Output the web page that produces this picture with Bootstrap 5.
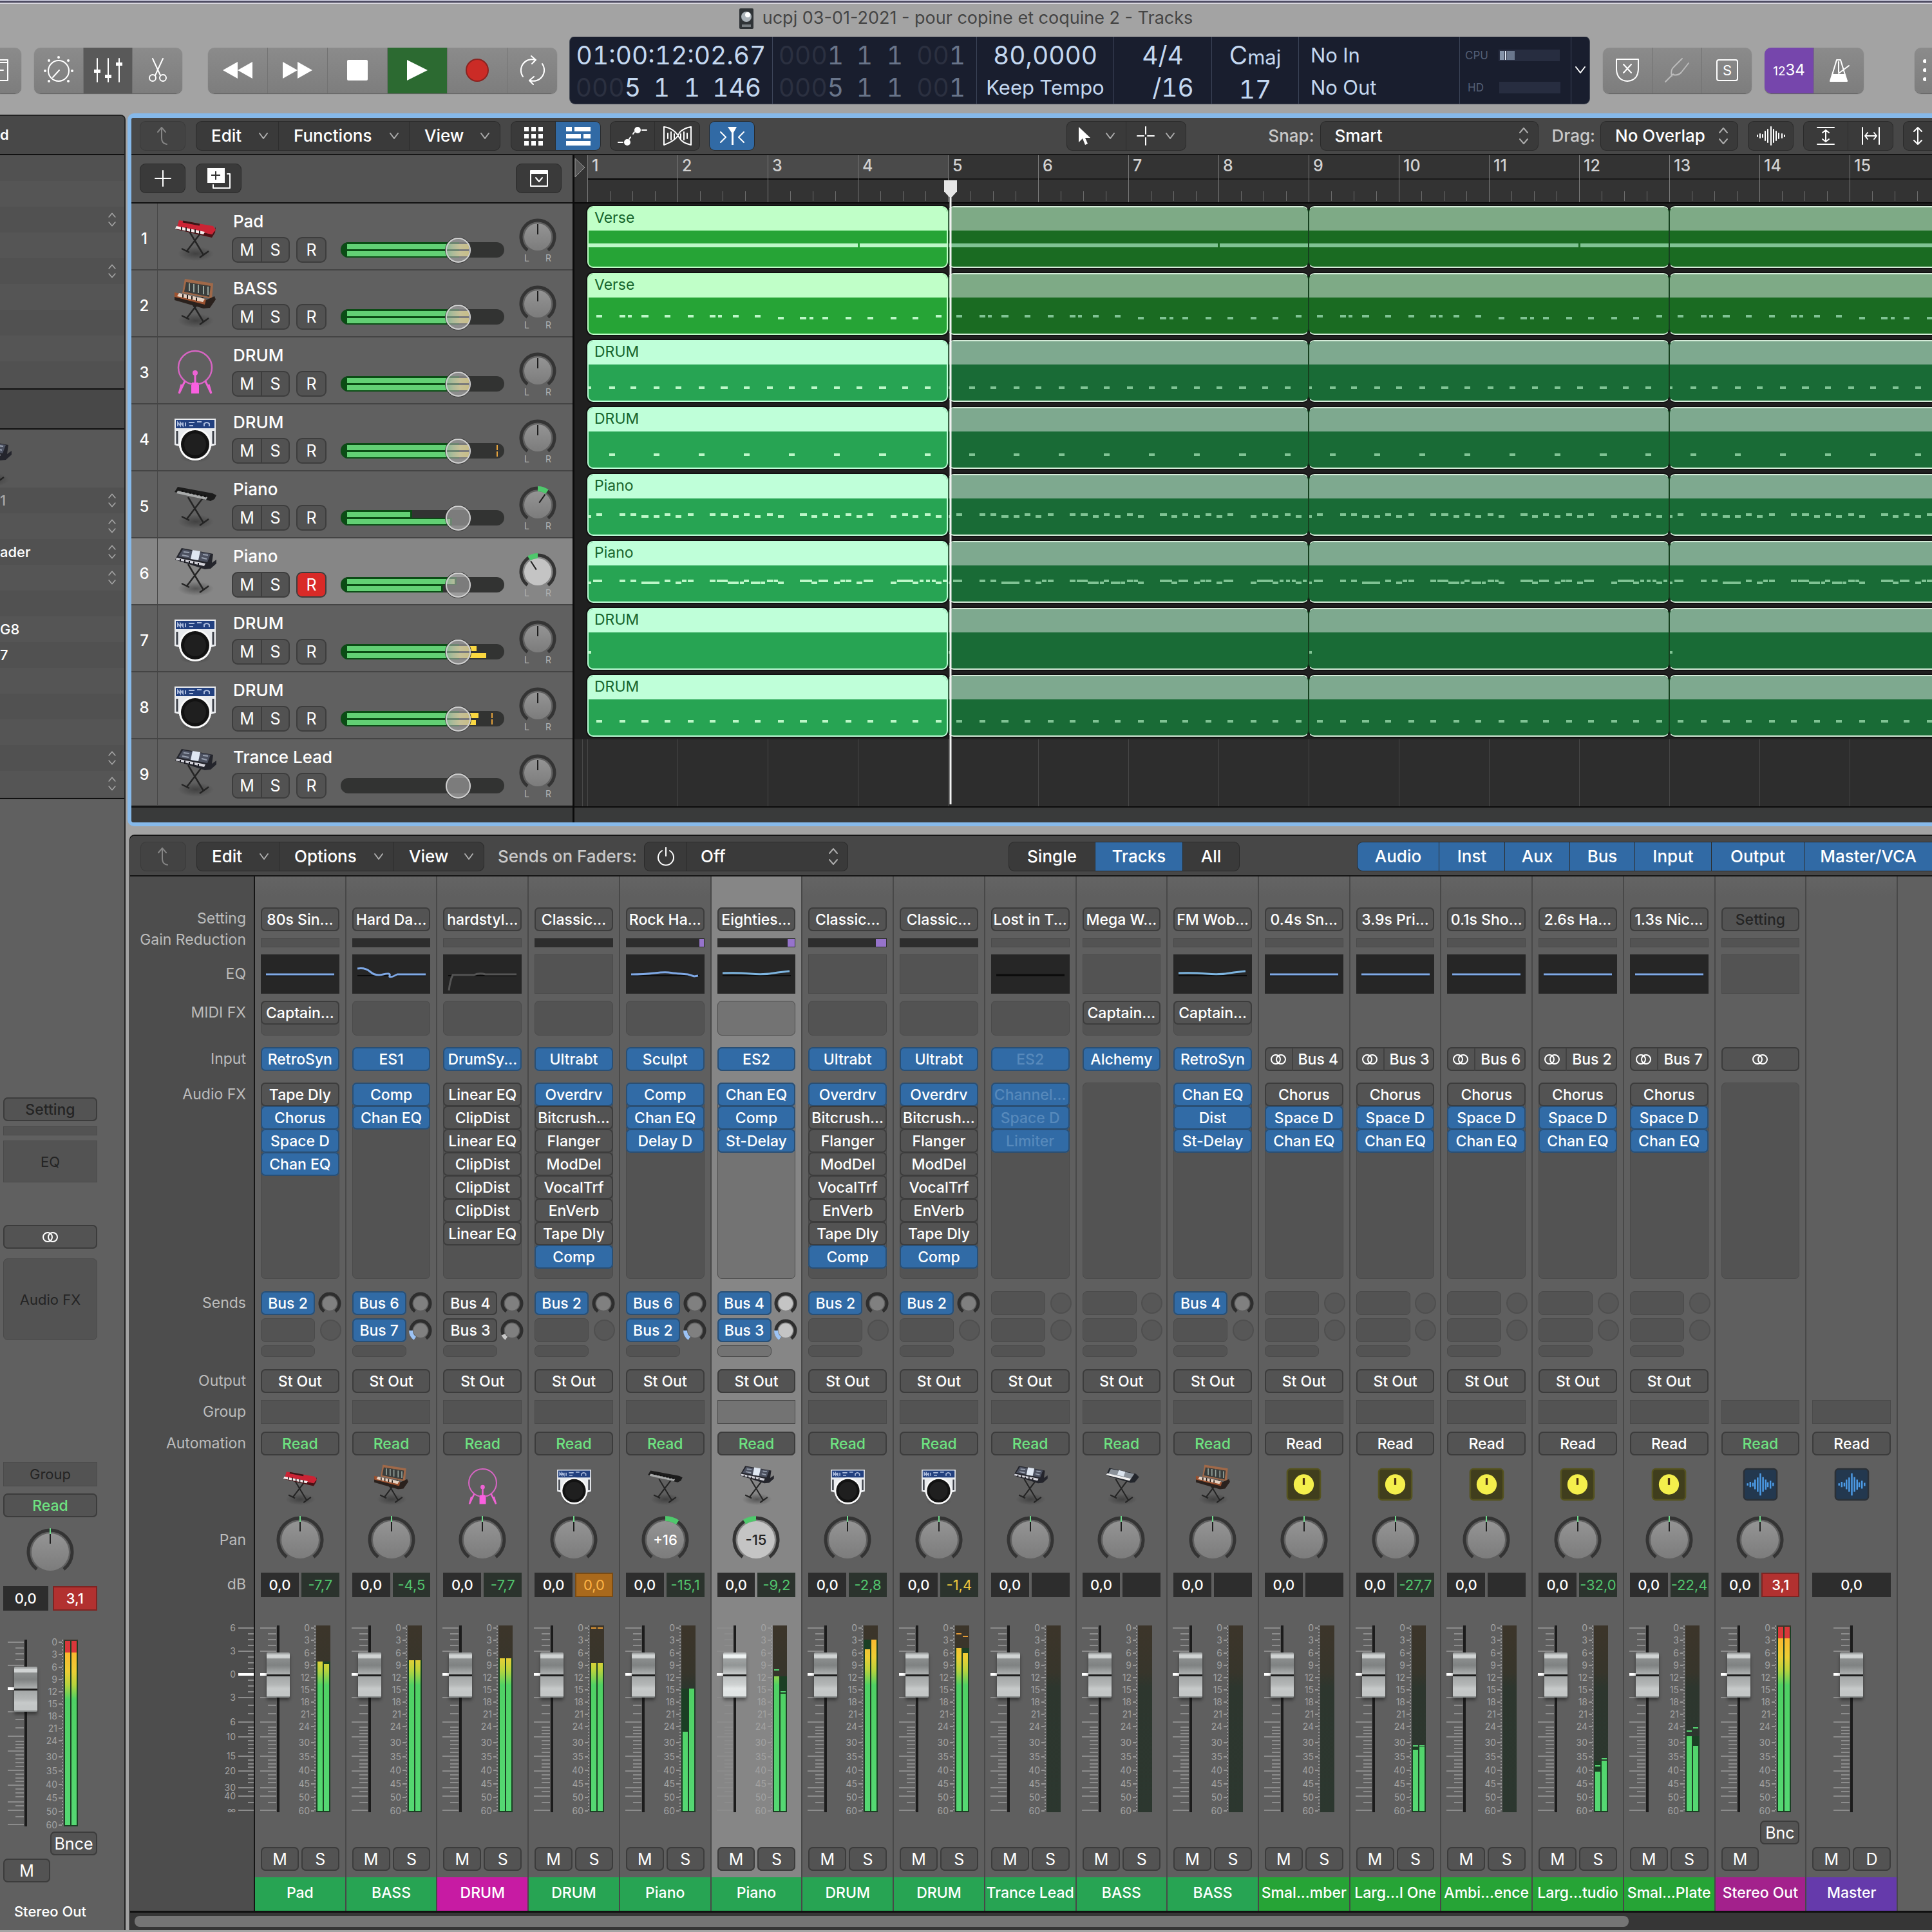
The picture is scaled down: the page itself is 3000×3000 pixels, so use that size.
<!DOCTYPE html>
<html lang="en">
<head>
<meta charset="utf-8">
<meta name="viewport" content="width=device-width, initial-scale=1">
<title>ucpj 03-01-2021 - pour copine et coquine 2 - Tracks</title>
<link href="https://cdn.jsdelivr.net/npm/bootstrap@5.3.0/dist/css/bootstrap.min.css" rel="stylesheet">
<style>
  body { background:#a3a3a3; font-family:Inter,"Liberation Sans",sans-serif; font-size:22px; line-height:1.2; color:#fff; overflow-x:hidden; }
  button, select, input { font:inherit; color:inherit; }
  button, select { border:0; padding:0; background:none; appearance:none; }
  svg { display:block; }
  .ln { fill:none; stroke:currentColor; stroke-width:2; stroke-linecap:round; stroke-linejoin:round; }

  /* window top */
  .topline { height:6px; background:linear-gradient(#b9b9cc 0 2px,#39374f 2px 4px,#d8d6de 4px 6px); }
  .wintitle { height:51px; padding-bottom:6px; color:#454545; font-size:27px; gap:14px; }
  .ctrlbar { height:119px; padding-bottom:15px; }
  .ctlgroup { height:71px; border-radius:10px; background:linear-gradient(#8b8b8b,#7d7d7d); box-shadow:0 1px 1px #5c5c5c; overflow:hidden; flex:none; }
  .ctlgroup > button { display:flex; align-items:center; justify-content:center; border-right:1px solid #727272; }
  .ctlgroup > button:last-child { border-right:0; }
  .w77 { width:77px; } .w93 { width:93px; }
  .on-dark { background:#595959; } .on-green { background:#2c6a31; } .on-purple { background:#7646ac; font-size:24px; }
  .lcd { height:104px; border-radius:8px; background:#191e2e; color:#c4d8f0; font-size:39px; line-height:50px; font-variant-numeric:tabular-nums; box-shadow:0 0 0 1px #444a55; }
  .lcd > div { border-right:1px solid #3c4458; padding-top:4px; }
  .lcd .ghost { color:#2b3040; } .lcd .dim { color:#69758a; }
  .lcd .pos { display:grid; grid-template-columns:110px 45px 47px 1fr; text-align:right; padding-right:17px; }
  .lcd .mid { font-size:31px; }
  .lcd .tiny { font-size:17px; color:#556077; }
  .loadbar { width:95px; height:18px; background:#272d40; }

  /* inspector */
  .inspector { width:195px; flex:none; background:#606060; border-top:2px solid #222; border-right:2px solid #222; border-top-right-radius:8px; overflow:hidden; margin-top:2px; margin-bottom:4px; }
  .insp-head { height:61px; background:#484848; border-bottom:2px solid #111; }
  .insp-list { border-bottom:2px solid #111; padding-bottom:2px; background:#515151; }
  .insp-row { height:40px; background:#555; padding-right:12px; font-weight:500; }
  .insp-row:nth-child(odd) { background:#515151; }
  .insp-row svg { color:#a5a5a5; }
  .insp-mid { height:62px; background:#484848; border-bottom:2px solid #111; }
  .insp-pic { height:90px; background:#585858; padding-top:10px; }
  .insp-ch { width:146px; margin-left:5px; margin-top:463px; }
  .dusk { color:#242424; }

  /* panels */
  .tracks-panel { border:6px solid #86b9ea; border-top-width:7px; border-right:0; border-radius:10px 0 0 10px; background:#2d2d2d; margin-left:3px; overflow:hidden; }
  .toolrow { background:#474747; border-bottom:2px solid #161616; padding-left:14px; font-weight:500; font-size:26px; }
  .toolrow.upper { height:58px; } .toolrow.lower { height:63px; padding-left:17px; padding-top:2px; }
  .tgroup { height:44px; border-radius:8px; background:#3a3a3a; box-shadow:0 0 0 1px #2a2a2a; overflow:hidden; flex:none; }
  .tgroup > button { display:flex; align-items:center; justify-content:center; border-right:1px solid #2d2d2d; }
  .tgroup > button:last-child { border-right:0; }
  .tgroup .menu { justify-content:space-between; padding:0 15px 0 23px; }
  .chev { color:#adadad; }
  .flatbtn { width:69px; } .faint { background:#434343; color:#858585; box-shadow:0 0 0 1px #3a3a3a; }
  .blue { background:#316aa5; }
  .tlabel { color:#c9c9c9; white-space:nowrap; }
  .picker { position:relative; height:44px; border-radius:8px; background:#3a3a3a; box-shadow:0 0 0 1px #2a2a2a; flex:none; }
  .picker select { width:100%; height:100%; padding-left:22px; font-weight:500; }
  .picker svg { position:absolute; right:14px; top:6px; pointer-events:none; color:#adadad; }

  /* track headers */
  .heads { width:688px; flex:none; border-right:3px solid #0b0b0b; background:#606060; }
  .addbar { height:75px; background:#535353; border-bottom:2px solid #111; padding:0 18px 2px 14px; gap:18px; }
  .thead-row { height:104px; border-bottom:2px solid #444; background:#606060; }
  .thead-row.sel { background:#868686; }
  .tnum { width:41px; border-right:1px solid #474747; font-size:24px; padding-top:9px; font-weight:500; }
  .ticon { width:66px; margin:10px 26px 0 25px; }
  .tname { font-size:26px; font-weight:500; line-height:30px; margin-top:13px; margin-bottom:11px; }
  .msr { height:36px; border-radius:7px; background:#525252; box-shadow:0 0 0 2px #3d3d3d; overflow:hidden; font-size:25px; }
  .msr button { width:43px; line-height:36px; text-align:center; }
  .msr button + button { border-left:2px solid #3d3d3d; }
  .msr .rec { background:#d92a27; }
  .volume { position:relative; width:254px; height:24px; border-radius:12px; background:#323332; margin-left:24px; margin-top:6px; }
  .volume .lvlclip { position:absolute; inset:0; border-radius:12px; overflow:hidden; }
  .volume .half { height:12px; padding:3px 3px 1px 10px; background:#0b4c15; max-width:184px; }
  .volume .half + .half { padding:2px 3px 2px 10px; }
  .volume .bar { height:8px; background:linear-gradient(90deg,#62d074 0 155px,#b7d980 165px,#f5e77a 175px,#fbd73f 197px); background-size:244px 8px; }
  .volume .peak { position:absolute; width:2px; height:18px; top:3px; background:linear-gradient(#e6a33c 0 8px,transparent 8px 10px,#e6a33c 10px); }
  .volume input { position:absolute; left:0; top:-8px; width:254px; height:40px; margin:0; appearance:none; background:none; }
  .volume input::-webkit-slider-thumb { appearance:none; width:39px; height:39px; border-radius:50%; border:2px solid #d0d0d0; background:rgba(170,170,170,.62); box-shadow:0 0 0 1px #3b3b3b; }
  .footstrip { height:25px; background:#393a3a; border-top:2px solid #0d0d0d; }

  /* arrangement */
  .lanes { position:relative; overflow:hidden; background:#2d2d2d; }
  .ruler { height:75px; border-bottom:2px solid #090909; background:#333; padding-left:20px; }
  .rbar { width:140px; flex:none; border-left:1px solid #7a7a7a; height:73px; }
  .rnum { height:38px; border-bottom:2px solid #1a1a1a; padding-left:6px; font-size:25px; font-weight:500; color:#d2d2d2; line-height:33px; }
  .cycle .rnum { background:#4a4a4a; border-bottom-color:#0a0a0a; }
  .rtick { height:33px; background:repeating-linear-gradient(90deg,transparent 0 34px,#6b6b6b 34px 35px) 0 100%/139px 15px no-repeat; }
  .lane { height:104px; padding:4px 0 4px 20px; background:#202020; }
  .lane-empty { height:104px; background:repeating-linear-gradient(90deg,#474747 0 1px,transparent 1px 140px) 20px 0; }
  .region { width:560px; flex:none; height:96px; border-radius:9px; border:2px solid var(--hd); background:var(--bd); overflow:hidden; color:#17652d; font-size:23px; box-shadow:0 0 0 2px #111; }
  .region .cap { height:36px; line-height:32px; padding-left:9px; background:var(--hd); }
  .region.loop { background:var(--lbd); border-color:#d5ecd9; border-left:1px solid #16401f; border-right:1px solid #16401f; border-radius:9px; box-shadow:0 2px 0 #111,0 -2px 0 #111; }
  .region.loop .cap { background:var(--lhd); }
  .g1 { --hd:#c0ffc8; --bd:#26a436; --lbd:#1a6b22; --lhd:#7eaa86; }
  .g2 { --hd:#bfffd9; --bd:#27a453; --lbd:#196b36; --lhd:#7ea98f; }
  .note { fill:#bdf7c8; } .loop .note { fill:#80c394; }
  .playhead { position:absolute; left:574px; top:38px; pointer-events:none; }

  /* mixer */
  .mixer { background:#606060; margin-top:13px; margin-left:6px; border-left:1px solid #111; border-top:2px solid #151515; border-top-left-radius:8px; overflow:hidden; margin-bottom:4px; }
  .rack { display:grid; grid-template-columns:194px repeat(18,minmax(0,1fr)) 53px; }
  .chan { display:grid; grid-template-rows:85px 25px 72px 65px 55px 323px 121px 56px 48px 49px 78px 90px 52px 334px 91px 62px; grid-template-columns:minmax(0,1fr); padding:0 9px; border-right:2px solid #484848; background:linear-gradient(#646464,#5f5f5f 30px); }
  .chan > * { align-self:end; }
  .chan.sel { background:#868686; --slot:#737373; }
  .rlabels { background:#4d4d4d; border-right:2px solid #151515; padding:0 12px 0 0; text-align:right; color:#bcbcbc; font-size:23px; white-space:nowrap; }
  .slot { display:block; width:100%; height:37px; border-radius:7px; background:#535353; box-shadow:inset 0 0 0 2px #3c3c3c; text-align:center; font-weight:500; font-size:23px; line-height:36px; white-space:nowrap; overflow:hidden; }
  .slot.b { background:#316ba6; box-shadow:inset 0 0 0 2px #2a4f74; }
  .slot.off { color:#5789bb; }
  .slot.read { color:#6ee281; }
  .slot.mute { color:#242424; }
  .hole { background:var(--slot,#535353); border:1px solid #4a4a4a; border-radius:7px; }
  .sq { border-radius:0; }
  .gainrow { height:14px; } .gainrow.dk { background:#2d2d2d; border:0; }
  .gr { height:12px; background:#9673cb; margin:1px 1px 0 auto; }
  .eqbox { height:61px; } .eqbox.dk { background:#262626; border:0; }
  .midi { height:54px; } .fxbox { height:305px; }
  .midi .slot, .fxbox .slot { margin:-1px; width:calc(100% + 2px); }
  .sendrow { display:flex; justify-content:space-between; align-items:center; height:37px; margin-bottom:5px; margin-right:-3px; }
  .sendrow .slot, .sendrow .hole, .sendtail { width:84px; height:37px; flex:none; }
  .sendtail { height:18px; }
  .dot { width:33px; height:33px; border-radius:50%; background:#575757; border:2px solid #4f4f4f; }
  .dbv { height:38px; background:#2d2d2d; flex:1 1 0; min-width:0; text-align:center; line-height:38px; font-size:22px; font-weight:500; white-space:nowrap; }
  .dbv.pk { color:#52c56d; background:#2b332d; font-weight:400; } .dbv.yl { color:#ecc93d; } .dbv.or { background:#a9691c; color:#ffb546; box-shadow:inset 0 0 0 2px #7a4b14; } .dbv.rd { background:#b23130; color:#fff; font-weight:500; box-shadow:inset 0 0 0 2px #7e2422; }
  .dbv.no { background:#2d2d2d; }
  .fadercell { position:relative; height:290px; }
  .fadercell svg { overflow:visible; }
  .fadercell text { font-size:14px; fill:#a2a2a2; text-anchor:end; }
  .fader { position:absolute; left:-118px; top:127px; width:290px; height:36px; margin:0; appearance:none; background:none; transform:rotate(-90deg); }
  .shift .fader { left:-84px; }
  .fader::-webkit-slider-thumb { appearance:none; width:70px; height:36px; border-radius:2px; background:linear-gradient(90deg,#8b8f8f 0 2px,#c3c6c6 2px 9px,#c7caca 14px,#b4b7b7 20px,#a4a7a7 33px,#1c1c1c 33px 36px,#b0b3b3 36px,#7f8282 50px,#8b8e8e 60px,#d0d3d3 62px 67px,#a5a8a8 67px); box-shadow:-4px 0 5px rgba(0,0,0,.4); }
  .sel .fader::-webkit-slider-thumb { filter:brightness(1.15); }
  .ms .slot { flex:1 1 0; min-width:0; font-weight:400; font-size:25px; }
  .nametag { height:52px; line-height:49px; margin:0 -9px; text-align:center; white-space:nowrap; overflow:hidden; font-weight:500; font-size:23px; }
  .scroller { height:30px; background:#363636; border-top:3px solid #101010; padding:5px 7px; }
  .scroller div { width:calc(83% + 9px); height:17px; border-radius:8px; background:#757575; }
</style>
</head>
<body>
<svg width="0" height="0" class="position-absolute" aria-hidden="true">
  <defs>
    <linearGradient id="lvl" gradientUnits="userSpaceOnUse" x1="0" y1="0" x2="0" y2="290">
      <stop offset="0" stop-color="#d9373a"/><stop offset=".069" stop-color="#d9373a"/><stop offset=".07" stop-color="#fbb82f"/>
      <stop offset=".17" stop-color="#ecce34"/><stop offset=".24" stop-color="#b9d33d"/><stop offset=".32" stop-color="#4fd164"/><stop offset="1" stop-color="#55d873"/>
    </linearGradient>
    <linearGradient id="well" x1="0" y1="0" x2="0" y2="1"><stop offset="0" stop-color="#3c352a"/><stop offset=".25" stop-color="#37352b"/><stop offset=".33" stop-color="#2d362e"/><stop offset="1" stop-color="#2c372f"/></linearGradient>
    <linearGradient id="knob" x1="0" y1="0" x2="0" y2="1"><stop offset="0" stop-color="#949494"/><stop offset="1" stop-color="#7c7c7c"/></linearGradient>
    <radialGradient id="shade"><stop offset="0" stop-color="#222" stop-opacity=".5"/><stop offset="1" stop-color="#222" stop-opacity="0"/></radialGradient>
    <g id="stand"><ellipse cx="34" cy="68" rx="28" ry="11" fill="url(#shade)"/><path d="M22 30L46 70M46 30L20 64M12 60l12 6M40 74l14-10" fill="none" stroke="#242424" stroke-width="2.5"/></g>
    <symbol id="i-red" viewBox="0 0 66 80"><use href="#stand"/><path d="M4 26l56 12 5-12-1 9-5 8-56-13z" fill="#4b1014"/><path d="M8 16l53 9 4 6-6 7-54-12z" fill="#cb2334"/><path d="M4 25l44 9-2 4-44-9z" fill="#f3eded"/><path d="M12 26v5M19 27v6M26 29v5M33 30v6M40 32v5" stroke="#222" stroke-width="2"/><path d="M14 18l26 5" stroke="#3a1517" stroke-width="3"/></symbol>
    <symbol id="i-mod" viewBox="0 0 66 80"><use href="#stand"/><path d="M17 3l44 7-2 24-46-9z" fill="#a06949"/><path d="M19 8l38 6-2 17-39-8z" fill="#393d3c"/><path d="M24 10v12M31 11v13M38 12v13M46 14v13M53 15v13" stroke="#97a49c" stroke-width="2"/><path d="M1 25l49 11 13-6 2 5-9 13-10 1-45-13z" fill="#2a211d"/><path d="M1 24l49 11-2 8-47-12z" fill="#9d5230"/><path d="M8 25l40 9-3 5-40-9z" fill="#e6d2c2"/><path d="M14 27v5M21 28v6M28 30v5M35 32v5" stroke="#231b17" stroke-width="2"/></symbol>
    <symbol id="i-pink" viewBox="0 0 66 80"><g fill="none" stroke="#d765c3" stroke-width="2.5"><circle cx="33" cy="37" r="26"/></g><path d="M17 58L8 77M49 58l9 19M8 77l4-14M58 77l-4-14M33 45v18" fill="none" stroke="#ee62d4" stroke-width="3"/><circle cx="33" cy="45" r="4" fill="#ee62d4"/><path d="M28 60h10v4h1v13H27V64h1z" fill="#fa5fe0"/></symbol>
    <symbol id="i-beat" viewBox="0 0 66 80"><ellipse cx="33" cy="72" rx="24" ry="8" fill="url(#shade)"/><path d="M1 12h64v41l-7 2q-5 21-25 22Q13 76 8 55l-7-2z" fill="#e9ebee"/><path d="M3 14h60v13H3z" fill="#22407f"/><path d="M6 24v-6l4 5v-5l4 5v-5M18 18v6M23 18h9M24 23h6M36 17h7M47 24v-4q4-4 8 0v4" fill="none" stroke="#a9b9da" stroke-width="2"/><path d="M5 31v20M61 31v20" stroke="#3b3f47" stroke-width="3"/><circle cx="33" cy="52" r="25" fill="#fafafa"/><circle cx="33" cy="52" r="22" fill="#121212"/><circle cx="33" cy="52" r="17" fill="#1f1f1f"/></symbol>
    <symbol id="i-black" viewBox="0 0 66 80"><use href="#stand"/><path d="M6 14l54 10 6 3-3 6-6 3-56-14z" fill="#1c1c1c"/><path d="M6 20l46 10-2 4-46-10z" fill="#a8aaaa"/><path d="M12 20l38 9" stroke="#111" stroke-width="3" stroke-dasharray="3 3"/></symbol>
    <symbol id="i-work" viewBox="0 0 66 80"><use href="#stand"/><path d="M12 5l49 9-2 14 7-5v6l-9 8-9 1-46-15 2-4z" fill="#24252c"/><path d="M14 7l43 7-5 13-45-9z" fill="#4c5160"/><path d="M29 8l12 2-3 14-12-2z" fill="#dfe7f2"/><path d="M15 11l9 1M13 16l10 2M45 15l8 1M43 20l8 2" stroke="#98a0af" stroke-width="2"/><path d="M3 23l44 10 2-4-45-9z" fill="#d3d3da"/><path d="M10 22v4M17 23v5M24 25v4M31 26v5M38 28v4" stroke="#1b1b22" stroke-width="2"/></symbol>
    <symbol id="i-alch" viewBox="0 0 66 80"><use href="#stand"/><path d="M10 9l50 11 6 6-8 10-8 1-46-14z" fill="#23262c"/><path d="M13 11l44 9-6 9-43-9z" fill="#8b929a"/><path d="M28 13l12 3-3 9-12-3z" fill="#dbe4ee"/><path d="M4 22l44 11 3-4-45-10z" fill="#f1f1f1"/></symbol>
    <symbol id="i-aux" viewBox="0 0 66 80"><rect x="2" y="11" width="62" height="58" rx="6" fill="#403e1d" stroke="#55531f" stroke-width="3"/><circle cx="33" cy="40" r="19" fill="#f4ef4c"/><path d="M33 28v13" stroke="#4a2f12" stroke-width="4"/></symbol>
    <symbol id="i-wave" viewBox="0 0 66 80"><rect x="2" y="11" width="62" height="58" rx="6" fill="#23384f" stroke="#2b3036" stroke-width="3"/><path d="M9 38v4M14 35v10M19 37v7M23 31v18M28 27v27M33 19v42M38 26v28M43 31v19M47 36v9M52 33v15M57 37v6" stroke="#4c9be6" stroke-width="3"/></symbol>
    <symbol id="i-link" viewBox="0 0 26 18"><circle cx="9" cy="9" r="7" class="ln"/><circle cx="17" cy="9" r="7" class="ln"/></symbol>
    <symbol id="i-down" viewBox="0 0 16 12"><path d="M2 2l6 8 6-8" class="ln"/></symbol>
    <symbol id="i-updn" viewBox="0 0 16 32"><path d="M2 11l6-7 6 7M2 21l6 7 6-7" class="ln"/></symbol>
    <symbol id="i-back" viewBox="0 0 28 32"><path d="M6 10l6-7 6 7M12 3v16q0 9 8 10" class="ln"/></symbol>
  </defs>
</svg>

<div class="topline"></div>
<div class="wintitle d-flex align-items-center justify-content-center">
  <svg width="22" height="32" viewBox="0 0 22 32"><rect width="22" height="32" rx="2" fill="#2f3336"/><circle cx="11" cy="13" r="8" fill="#aab2b8"/><circle cx="13" cy="10" r="4" fill="#fff"/><path d="M4 25h14v4H4z" fill="#767c80"/></svg>
  <span>ucpj 03-01-2021 - pour copine et coquine 2 - Tracks</span>
</div>

<header class="ctrlbar d-flex align-items-center overflow-hidden">
  <div class="ctlgroup d-flex rounded-start-0" style="width:33px"><button aria-label="Quick help"><svg width="16" height="40" viewBox="0 0 16 40"><path d="M0 4h12v32H0M0 8h12M0 20h5" class="ln" stroke-width="3"/></svg></button></div>
  <div class="ctlgroup d-flex me-4" style="width:230px;margin-left:20px">
    <button class="w77" aria-label="Smart controls"><svg width="46" height="46" viewBox="0 0 46 46"><circle cx="23" cy="24" r="16" class="ln"/><path d="M14 34l10-11" class="ln"/><g fill="#fff"><circle cx="23" cy="3" r="2"/><circle cx="8" cy="8" r="2"/><circle cx="38" cy="8" r="2"/><circle cx="2" cy="24" r="2"/><circle cx="44" cy="24" r="2"/><circle cx="8" cy="40" r="2"/><circle cx="38" cy="40" r="2"/></g></svg></button>
    <button class="w77 on-dark" aria-label="Mixer"><svg width="46" height="40" viewBox="0 0 46 40"><path d="M6 2v36M23 2v36M40 2v36" class="ln"/><path d="M1 19h10v5H1zM18 27h10v5H18zM35 8h10v5H35z" fill="#fff"/></svg></button>
    <button class="w77" aria-label="Editors"><svg width="34" height="40" viewBox="0 0 34 40"><path d="M9 2l12 26M25 2L13 28" class="ln"/><circle cx="9" cy="32" r="5" class="ln"/><circle cx="25" cy="32" r="5" class="ln"/></svg></button>
  </div>
  <div class="ctlgroup d-flex ms-3 me-3">
    <button class="w93" aria-label="Rewind"><svg width="46" height="28"><path d="M23 1v26L0 14zM46 1v26L23 14z" fill="#fff"/></svg></button>
    <button class="w93" aria-label="Forward"><svg width="46" height="28"><path d="M0 1v26l23-13zM23 1v26l23-13z" fill="#fff"/></svg></button>
    <button class="w93" aria-label="Stop"><svg width="32" height="32"><rect width="32" height="32" rx="2" fill="#fff"/></svg></button>
    <button class="w93 on-green" aria-label="Play"><svg width="34" height="34"><path d="M1 1v32l32-16z" fill="#fff"/></svg></button>
    <button class="w93" aria-label="Record"><svg width="38" height="38"><circle cx="19" cy="19" r="17" fill="#cb2b26" stroke="#8b2320" stroke-width="2"/></svg></button>
    <button class="w77" aria-label="Cycle"><svg width="44" height="46" viewBox="0 0 44 46"><path d="M7 33A17 17 0 0 1 26 7M20 1l7 6-6 6M37 13a17 17 0 0 1-19 26M24 33l-7 6 6 6" class="ln" stroke-width="3"/></svg></button>
  </div>
  <div class="lcd d-flex flex-grow-1 ms-1">
    <div style="width:315px"><div class="text-center">01:00:12:02.67</div><div class="pos"><span><span class="ghost">000</span>5</span><span>1</span><span>1</span><span>146</span></div></div>
    <div style="width:317px"><div class="pos dim"><span><span class="ghost">000</span>1</span><span>1</span><span>1</span><span><span class="ghost">00</span>1</span></div><div class="pos dim"><span><span class="ghost">000</span>5</span><span>1</span><span>1</span><span><span class="ghost">00</span>1</span></div></div>
    <div class="text-center" style="width:213px"><div>80,0000</div><div class="mid">Keep Tempo</div></div>
    <div class="text-center" style="width:152px"><div>4/4</div><div class="ps-4 ms-2">/16</div></div>
    <div class="text-center" style="width:135px"><div>C<span class="mid">maj</span></div><div>17</div></div>
    <div class="flex-grow-1 mid" style="padding-left:18px"><div>No In</div><div>No Out</div></div>
    <div class="tiny ps-2" style="width:173px"><div class="d-flex align-items-center gap-3"><span>CPU</span><div class="loadbar"><svg width="26" height="18"><path d="M2 2h7v14H2z" fill="#8493a9"/><path d="M10 2h2v14h-2z" fill="#dfe8f5"/><path d="M13 2h12v14H13z" fill="#6a778d"/></svg></div></div><div class="d-flex align-items-center gap-4 ps-1"><span>HD</span><div class="loadbar"></div></div></div>
    <button class="text-white" style="width:28px" aria-label="Display mode"><svg width="20" height="18" class="mx-auto"><path d="M3 4l7 9 7-9" class="ln" stroke-width="3"/></svg></button>
  </div>
  <div class="ctlgroup d-flex" style="margin-left:21px">
    <button class="w77" aria-label="Replace"><svg width="38" height="38" viewBox="0 0 38 38"><path d="M2 2h34v16q-1 17-17 18Q3 35 2 18zM13 10l12 13M25 10L13 23" class="ln" stroke-width="3"/></svg></button>
    <button class="w77" aria-label="Tuner" style="color:#bbb"><svg width="40" height="40" viewBox="0 0 40 40"><path d="M2 38l12-12M12 29q-3-9 4-15L28 2M14 27q8 2 13-4L38 9" class="ln" stroke-width="3"/></svg></button>
    <button class="w77" aria-label="Solo"><svg width="36" height="36"><rect x="2" y="2" width="32" height="32" rx="3" class="ln"/><text x="18" y="26" font-size="22" text-anchor="middle" fill="#fff">S</text></svg></button>
  </div>
  <div class="ctlgroup d-flex" style="margin-left:20px"><button class="w77 on-purple"><span><small style="font-size:19px">12</small>34</span></button><button class="w77" aria-label="Metronome"><svg width="36" height="38" viewBox="0 0 36 38"><path d="M4 36L14 3h6l10 33zM17 24L33 12M17 6v16" class="ln"/><path d="M8 25h19l4 11H4z" fill="#fff"/></svg></button></div>
  <div class="ctlgroup d-flex rounded-end-0" style="margin-left:79px;width:27px"><button class="w-100" aria-label="Lists"><svg width="8" height="36"><circle cx="6" cy="4" r="3" fill="#fff"/><circle cx="6" cy="18" r="3" fill="#fff"/><circle cx="6" cy="32" r="3" fill="#fff"/></svg></button></div>
</header>

<main class="d-flex">
  <aside class="inspector">
    <div class="insp-head d-flex align-items-center"><b class="fw-semibold">d</b></div>
    <div class="insp-list" id="inspTop"></div>
    <div class="insp-mid"></div>
    <div class="insp-list"><div class="insp-pic"><svg width="66" height="80" style="margin-left:-48px"><use href="#i-work"/></svg></div><div id="inspLow"></div></div>
    <div class="insp-ch" id="inspCh"></div>
  </aside>

  <div class="flex-grow-1" style="min-width:0">
    <section class="tracks-panel">
      <div class="toolrow upper d-flex align-items-center overflow-hidden">
        <div class="tgroup d-flex faint"><button class="flatbtn" aria-label="Up"><svg width="28" height="32"><use href="#i-back"/></svg></button></div>
        <div class="tgroup d-flex" style="margin:0 18px">
          <button class="menu" style="width:128px">Edit <svg class="chev" width="16" height="12"><use href="#i-down"/></svg></button><button class="menu" style="width:203px">Functions <svg class="chev" width="16" height="12"><use href="#i-down"/></svg></button><button class="menu" style="width:140px">View <svg class="chev" width="16" height="12"><use href="#i-down"/></svg></button>
        </div>
        <div class="tgroup d-flex"><button class="flatbtn" aria-label="Grid"><svg width="30" height="30" fill="#fff"><path d="M1 1h7v7H1zM12 1h7v7h-7zM23 1h7v7h-7zM1 12h7v7H1zM12 12h7v7h-7zM23 12h7v7h-7zM1 23h7v7H1zM12 23h7v7h-7zM23 23h7v7h-7z"/></svg></button><button class="flatbtn blue" aria-label="Tracks"><svg width="40" height="30" fill="#fff"><path d="M1 1h9v7H1zM14 1h25v7H14zM1 12h23v7H1zM28 12h11v7H28zM1 23h38v7H1z"/></svg></button></div>
        <div class="tgroup d-flex" style="margin:0 16px"><button class="flatbtn" aria-label="Automation"><svg width="46" height="30"><path d="M1 25h7M38 6h7" class="ln" stroke-width="3"/><path d="M18 20l2-3M24 12l2-3" class="ln"/><circle cx="15" cy="25" r="5" fill="#fff"/><circle cx="31" cy="6" r="5" fill="#fff"/></svg></button><button class="flatbtn" aria-label="Flex"><svg width="46" height="30"><path d="M2 1v28Q22 22 26 10 32 3 44 1v28Q30 26 26 18 18 3 2 1M8 11v8M13 9v12M18 12v7M28 12v7M33 9v12M38 11v8" class="ln"/></svg></button></div>
        <div class="tgroup d-flex blue"><button class="flatbtn" aria-label="Catch"><svg width="42" height="30"><path d="M14 1h14l-5 9v19h-3V10z" fill="#fff"/><path d="M3 9l8 8-8 8M39 9l-8 8 8 8" class="ln"/></svg></button></div>
        <div class="tgroup d-flex ms-auto" style="margin-right:128px"><button style="width:92px;gap:22px" aria-label="Pointer tool"><svg width="20" height="30"><path d="M1 1v24l6-6 4 10 4-2-4-9h8z" fill="#fff"/></svg><svg class="chev" width="16" height="12"><use href="#i-down"/></svg></button><button style="width:92px;gap:16px" aria-label="Marquee tool"><svg width="28" height="30"><path d="M14 1v11M14 18v11M1 15h10M17 15h10" class="ln"/></svg><svg class="chev" width="16" height="12"><use href="#i-down"/></svg></button></div>
        <label class="tlabel" for="snap" style="margin-right:10px">Snap:</label>
        <div class="picker" style="width:337px"><select id="snap"><option>Smart</option></select><svg width="16" height="32"><use href="#i-updn"/></svg></div>
        <label class="tlabel" for="drag" style="margin:0 9px 0 22px">Drag:</label>
        <div class="picker" style="width:212px"><select id="drag"><option>No Overlap</option></select><svg width="16" height="32"><use href="#i-updn"/></svg></div>
        <div class="tgroup d-flex" style="margin:0 17px"><button class="flatbtn" aria-label="Waveform zoom"><svg width="46" height="30"><path d="M2 14v2M6 12v6M10 13v4M14 8v14M18 5v20M23 1v28M27 5v20M31 8v14M35 11v8M40 12v6M44 14v2" class="ln"/></svg></button></div>
        <div class="tgroup d-flex"><button class="flatbtn" aria-label="Vertical zoom"><svg width="30" height="30"><path d="M2 2h26M2 28h26M15 6v18M10 10l5-4 5 4M10 20l5 4 5-4" class="ln"/></svg></button><button class="flatbtn" aria-label="Horizontal zoom"><svg width="30" height="30"><path d="M2 2v26M28 2v26M6 15h18M10 10l-4 5 4 5M20 10l4 5-4 5" class="ln"/></svg></button></div>
        <div class="tgroup d-flex rounded-end-0" style="margin-left:17px;width:44px"><button class="w-100" aria-label="Zoom"><svg width="16" height="30"><path d="M8 2v26M2 8l6-6 6 6M2 22l6 6 6-6" class="ln"/></svg></button></div>
      </div>
      <div class="d-flex">
        <div class="heads">
          <div class="addbar d-flex align-items-center">
            <div class="tgroup d-flex"><button class="flatbtn" aria-label="Add track"><svg width="26" height="26"><path d="M13 1v24M1 13h24" class="ln"/></svg></button></div>
            <div class="tgroup d-flex"><button class="flatbtn" aria-label="Duplicate track"><svg width="38" height="34"><path d="M1 1h27v23H1z" fill="#fff"/><path d="M14 6v13M7 12h14" stroke="#333" stroke-width="2"/><path d="M32 10h4v22H10v-5" class="ln"/></svg></button></div>
            <div class="tgroup d-flex ms-auto"><button class="flatbtn" aria-label="Header options"><svg width="30" height="28"><path d="M2 2h26v24H2z" class="ln"/><path d="M2 2h26v5H2z" fill="#fff"/><path d="M10 13l5 6 5-6" class="ln"/></svg></button></div>
          </div>
          <div id="heads"></div>
          <div class="footstrip"></div>
        </div>
        <div class="lanes flex-grow-1" style="min-width:0">
          <div class="ruler d-flex" id="ruler"></div>
          <div id="lanes"></div>
          <div class="lane-empty"></div>
          <div class="footstrip"></div>
          <svg class="playhead" width="20" height="970"><path d="M10 24v946" stroke="#f2f2f2" stroke-width="3"/><path d="M-3 1h26v14L12 27H8L-3 15z" fill="#e6e6e6"/></svg>
          <svg class="position-absolute start-0" style="top:4px" width="18" height="32"><path d="M1 1l15 14L1 30z" fill="#555" stroke="#999"/></svg>
        </div>
      </div>
    </section>

    <section class="mixer">
      <div class="toolrow lower d-flex align-items-center overflow-hidden">
        <div class="tgroup d-flex faint"><button class="flatbtn" aria-label="Up"><svg width="28" height="32"><use href="#i-back"/></svg></button></div>
        <div class="tgroup d-flex" style="margin:0 22px 0 18px">
          <button class="menu" style="width:128px">Edit <svg class="chev" width="16" height="12"><use href="#i-down"/></svg></button><button class="menu" style="width:178px">Options <svg class="chev" width="16" height="12"><use href="#i-down"/></svg></button><button class="menu" style="width:139px">View <svg class="chev" width="16" height="12"><use href="#i-down"/></svg></button>
        </div>
        <label class="tlabel" for="sof" style="width:228px">Sends on Faders:</label>
        <div class="tgroup d-flex rounded-end-0"><button style="width:65px" aria-label="Sends on faders power"><svg width="28" height="30"><path d="M8 6a12 12 0 1 0 12 0M14 1v13" class="ln"/></svg></button></div>
        <div class="picker rounded-start-0" style="width:250px"><select id="sof"><option>Off</option></select><svg width="16" height="32"><use href="#i-updn"/></svg></div>
        <div class="tgroup d-flex ms-auto" style="margin-right:184px"><button style="width:134px">Single</button><button class="blue" style="width:136px">Tracks</button><button style="width:87px">All</button></div>
        <div class="tgroup d-flex blue rounded-end-0"><button style="width:127px">Audio</button><button style="width:102px">Inst</button><button style="width:101px">Aux</button><button style="width:101px">Bus</button><button style="width:119px">Input</button><button style="width:144px">Output</button><button style="width:198px">Master/VCA</button></div>
      </div>
      <div class="rack" id="rack"></div>
      <div class="scroller"><div></div></div>
    </section>
  </div>
</main>

<script>
const $ = id => document.getElementById(id);
const use = (n,w,h) => `<svg width="${w}" height="${h}"><use href="#i-${n}"/></svg>`;
const pt = (c,r,a) => `${(c + r*Math.sin(a*Math.PI/180)).toFixed(1)} ${(c - r*Math.cos(a*Math.PI/180)).toFixed(1)}`;
const arc = (c,r,a,b) => `M${pt(c,r,a)}A${r} ${r} 0 ${b-a>180?1:0} 1 ${pt(c,r,b)}`;

/* pan knob: size, pan value, optional number, light face */
function knob(s, pan, text, light, needle) {
  const c = s/2, a = pan*2.2, r = c-3;
  return `<svg width="${s}" height="${s}" class="mx-auto"><circle cx="${c}" cy="${c}" r="${c-8}" fill="${light?'#c4c4c4':'url(#knob)'}"/>
  <path d="${arc(c,r,-142,142)}" fill="none" stroke="#343434" stroke-width="5"/>
  ${pan ? `<path d="${arc(c,r-1,Math.min(0,a),Math.max(0,a))}" fill="none" stroke="#4fc86c" stroke-width="8"/>` : (needle?`<path d="M${c} 0v9" stroke="#6fd98b" stroke-width="2"/>`:'')}
  ${text ? `<text x="${c}" y="${c+8}" font-size="22" font-weight="500" text-anchor="middle" fill="${light?'#222':'#fff'}">${text}</text>` : `<path d="M${pt(c,c-9,a)}L${pt(c,needle?c-24:4,a)}" stroke="#1e1e1e" stroke-width="2"/>`}</svg>`;
}

/* inspector */
const row = (t,ch,c) => `<div class="insp-row d-flex align-items-center justify-content-between"><span class="${c||''}">${t}</span>${ch?'<svg width="14" height="26"><use href="#i-updn"/></svg>':''}</div>`;
$('inspTop').innerHTML = [0,0,1,0,1,0,0,0,0].map(c=>row('',c)).join('');
$('inspLow').innerHTML = [['1',1,'text-white-50'],['',1],['ader',1],['',1],['',0],['G8',0],['7',0],['',0],['',0],['',0],['',1],['',1]].map(r=>row(...r)).join('');

/* track headers: name, icon, pan, level ends, peak marks */
const tracks = [
 ['Pad','red',0,199,199,[]],['BASS','mod',0,199,199,[]],['DRUM','pink',0,199,199,[]],['DRUM','beat',0,199,199,[242]],
 ['Piano','black',16,108,170,[]],['Piano','work',-15,177,156,[]],['DRUM','beat',0,211,226,[]],['DRUM','beat',0,214,210,[234]],['Trance Lead','work',0,0,0,[]]];
const bar = v => `<div class="half" style="width:${v+3}px"><div class="bar" style="width:${v-10}px"></div></div>`;
$('heads').innerHTML = tracks.map((t,i)=>`<div class="thead-row d-flex ${i==5?'sel':''}">
 <div class="tnum d-flex align-items-center justify-content-center">${i+1}</div><div class="ticon">${use(t[1],66,80)}</div>
 <div><div class="tname">${t[0]}</div><div class="d-flex">
  <div class="msr d-flex"><button>M</button><button>S</button></div><div class="msr d-flex" style="margin-left:14px"><button class="${i==5?'rec':''}">R</button></div>
  <div class="volume"><div class="lvlclip">${t[3]?bar(t[3])+bar(t[4]):''}${t[5].map(p=>`<div class="peak" style="left:${p}px"></div>`).join('')}</div><input type="range" value="76" aria-label="${t[0]} volume"></div></div></div>
 <div class="ms-auto" style="margin-right:25px;padding-top:23px">${knob(58,t[2],'',i==5)}<div class="d-flex justify-content-between px-2" style="font-size:14px;color:#b0b0b0;line-height:16px;margin-top:-4px"><span>L</span><span>R</span></div></div></div>`).join('');

/* ruler and regions */
let r=''; for(let i=1;i<=15;i++) r+=`<div class="rbar ${i<5?'cycle':''}"><div class="rnum">${i}</div><div class="rtick"></div></div>`;
$('ruler').innerHTML = r;
const at = s => s.split(' ').map(n=>{const m=n.match(/^(\d+)(l?)(?::(\d+))?$/);return [Math.round(m[1]/2.24-34),m[2]?3:0,m[3]?Math.round(m[3]/2.24):9];});
const lanes = [
 ['Verse','g1',23,null],
 ['Verse','g1',29,at('103 184 213:14 260:25 341 421 498 526:14 578 653 735l 810l:22 844l:14 890l 971l 1047l 1127l 1203l 1284')],
 ['DRUM','g2',36,at('76:8 147 222 303 379 459 536:24 616 696 772 852 929 1009 1086:24 1166 1246')],
 ['DRUM','g2',36,at('147 303 459 616 772 929 1086:24 1246')],
 ['Piano','g2',25,at('76l:8 103 184 222 260l:24 303l 341 379l 421 498 536:24 578l 616 653l 696 735l 810:24 852l 890 929l 971 1009l 1047 1127l 1166 1203l 1246 1284l')],
 ['Piano','g2',24,at('76l:8 91:32 184 222 260l:62 341 379l 402:16 421 498 521:38 559l:38 602l:14 616:18 640l:34 677l:14 696:22 721:14 735l 810:42 852l 876:34 929l 951:16 971 1009l 1033:34 1127l 1150:36 1186 1203l 1228:14 1250:14 1271:14 1284l 1308:14')],
 ['DRUM','g2',31,at('76:8')],
 ['DRUM','g2',34,at('103 184 260:24 341 421 498 578 653 735 810:24 890 971 1047 1127 1203 1284')]];
const notes = l => `<svg width="558" height="56">${l[3] ? l[3].map(n=>`<rect class="note" x="${n[0]}" y="${l[2]+n[1]-2}" width="${n[2]}" height="4"/>`).join('') : `<rect class="note" y="20" width="418" height="6"/><rect class="note" x="421" y="20" width="137" height="6"/>`}</svg>`;
$('lanes').innerHTML = lanes.map(l=>`<div class="lane d-flex">${[0,1,2,3].map(k=>`<div class="region ${l[1]} ${k?'loop':''}"><div class="cap">${k?'':l[0]}</div>${notes(l)}</div>`).join('')}</div>`).join('');

/* mixer */
const majL=[4,40,76,112,150,173,203,226,252,265,287], minL=[13,22,31,49,58,67,85,94,103,124,137,158,163,168,179,185,191,197,209,215,220,232,238,244,258,275];
const mNum=[[0,4],[3,23],[6,43],[9,62],[12,81],[15,100],[18,119],[21,138],[24,157],[30,182],[35,204],[40,225],[45,246],[50,267],[60,288]];
const ticks = (x,len,x2) => `<path d="${majL.filter(y=>y!=76).map(y=>`M${x} ${y}H${x2}`).join('')}${minL.map(y=>`M${x2-len} ${y}H${x2}`).join('')}" stroke="#8c8c8c" stroke-width="2"/>`;
function fader(m, solo) {
  const o = solo?34:0; let s = ticks(o-1,13,o+24) + `<path d="M${o-1} 76h10" stroke="#fff" stroke-width="4"/><path d="M${o+27} 0v290" stroke="#1c1c1c" stroke-width="4"/>`;
  if (!solo) {
    s += mNum.map(n=>`<text x="76" y="${n[1]+5}">${n[0]}</text>`).join('') + `<path d="${mNum.map(n=>`M78 ${n[1]}h5`).join('')}" stroke="#999" stroke-width="2"/><path d="M84 0v290" stroke="#999" stroke-width="2" stroke-dasharray="2 3"/>`;
    s += `<rect x="86" y="0" width="22" height="290" fill="url(#well)"/>`;
    if (m) { const top=Math.min(m[0],m[1]);
      s += `<rect x="86" y="${top}" width="22" height="${290-top}" fill="#1b3f24"/><rect x="88" y="${m[0]}" width="8" height="${288-m[0]}" fill="url(#lvl)"/><rect x="98" y="${m[1]}" width="8" height="${288-m[1]}" fill="url(#lvl)"/>`;
      if (m[2]) s += `<rect x="88" y="${m[2]}" width="8" height="2" fill="${m[4]||'#55d873'}"/><rect x="98" y="${m[3]}" width="8" height="2" fill="${m[4]||'#55d873'}"/>`; }
  }
  return `<div class="fadercell ${solo?'shift':''}"><svg width="121" height="290">${s}</svg><input class="fader" type="range" value="81" aria-label="Level"></div>`;
}
const O='#e59a35';
const FX5='Overdrv* Bitcrush... Flanger ModDel VocalTrf EnVerb Tape_Dly Comp*', AX='Chorus Space_D* Chan_EQ*';
/* setting, gain, eq, midi, input, fx, sends, icon, pan, dB, level, name, colour */
const G='#27a453', G1='#26a436';
const ch = [
 ['80s Sin...',-1,'flat','Captain...','RetroSyn','Tape_Dly Chorus* Space_D* Chan_EQ*',['Bus 2*'],'red',0,'-7,7',[56,60],'Pad',G],
 ['Hard Da...',0,'dip','','ES1','Comp* Chan_EQ*',['Bus 6*','Bus 7*p'],'mod',0,'-4,5',[54,54],'BASS',G],
 ['hardstyl...',-1,'cut','','DrumSy...','Linear_EQ ClipDist Linear_EQ ClipDist ClipDist ClipDist Linear_EQ',['Bus 4','Bus 3p'],'pink',0,'-7,7',[51,51],'DRUM','#c71ba3'],
 ['Classic...',0,'','','Ultrabt',FX5,['Bus 2*'],'beat',0,'0,0',[58,58,3,3,O],'DRUM',G],
 ['Rock Ha...',7,'bump','','Sculpt','Comp* Chan_EQ* Delay_D*',['Bus 6*','Bus 2*p'],'black',16,'-15,1',[165,98],'Piano',G],
 ['Eighties...',11,'rise','','ES2','Chan_EQ* Comp* St-Delay*',['Bus 4*','Bus 3*p'],'work',-15,'-9,2',[79,106,68,102],'Piano',G],
 ['Classic...',16,'','','Ultrabt',FX5,['Bus 2*'],'beat',0,'-2,8',[37,22],'DRUM',G],
 ['Classic...',0,'','','Ultrabt',FX5,['Bus 2*'],'beat',0,'-1,4',[35,43,12,16,O],'DRUM',G],
 ['Lost in T...',-1,'none','','ES2','Channel...*o Space_D*o Limiter*o',[],'work',0,'',null,'Trance Lead',G],
 ['Mega W...',-1,'','Captain...','Alchemy','',[],'alch',0,'',null,'BASS',G],
 ['FM Wob...',-1,'rise','Captain...','RetroSyn','Chan_EQ* Dist* St-Delay*',['Bus 4*'],'mod',0,'',null,'BASS',G],
 ['0.4s Sn...',-1,'flat',null,'@Bus 4',AX,[],'aux',0,'',null,'Smal...mber',G1],
 ['3.9s Pri...',-1,'flat',null,'@Bus 3',AX,[],'aux',0,'-27,7',[193,189,186,186],'Larg...l One',G1],
 ['0.1s Sho...',-1,'flat',null,'@Bus 6',AX,[],'aux',0,'',null,'Ambi...ence',G1],
 ['2.6s Ha...',-1,'flat',null,'@Bus 2',AX,[],'aux',0,'-32,0',[227,210,217,206],'Larg...tudio',G1],
 ['1.3s Nic...',-1,'flat',null,'@Bus 7',AX,[],'aux',0,'-22,4',[172,187,163,158],'Smal...Plate',G1],
 ['Setting',-1,'',null,'@','',null,'wave',0,'3,1',[2,2],'Stereo Out','#a3218c'],
 [null,null,null,null,null,null,null,'wave',null,null,null,'Master','#653aab']];
const EQ = {flat:['M8 31H114','#7fa9e6'],none:['M8 32H114','#0c0c0c'],dip:['M8 22Q20 20 28 27T48 31 58 33 70 31H114','#7fa9e6'],cut:['M9 56Q11 40 15 32H48Q56 28 66 31H114','#555'],bump:['M8 31Q28 31 44 29T66 28 96 31L106 34 112 33','#7fa9e6'],rise:['M8 29Q30 28 52 30T94 28L112 26','#7db5e0']};
const slot = (t,on,o) => `<button class="slot ${on?'b':''} ${o?'off':''}">${t.replace('_',' ')}</button>`;
const blank = '<div></div>';
const sendKnob = (p,on,l) => `<svg width="36" height="36"><circle cx="18" cy="18" r="11" fill="${l?'#c4c4c4':'#808080'}"/><path d="${arc(18,15,-145,145)}" fill="none" stroke="#2e2e2e" stroke-width="5"/>${p?`<path d="${arc(18,15,-145,on?-90:-115)}" fill="none" stroke="${on?'#9cc3f5':'#c9c9c9'}" stroke-width="6"/>`:''}</svg>`;
const db = v => v==='' ? '<div class="dbv no"></div>' : `<div class="dbv pk ${v=='0,0'?'or':v=='3,1'?'rd':v=='-1,4'?'yl':''}">${v}</div>`;
function strip(c,i) {
  const sel=i==5, mst=i==17, out=i==16, aux=i>10;
  let h = mst ? blank.repeat(8) : (out?`<button class="slot mute">Setting</button>`:slot(c[0])) +
    `<div class="hole sq gainrow ${c[1]>=0?'dk':''}">${c[1]>0?`<div class="gr" style="width:${c[1]}px"></div>`:''}</div>` +
    (c[2]?`<div class="hole sq eqbox dk"><svg width="121" height="61"><path d="M8 33H114" stroke="#0b0b0b" stroke-width="2"/><path d="${EQ[c[2]][0]}" fill="none" stroke="${EQ[c[2]][1]}" stroke-width="3"/></svg></div>`:'<div class="hole sq eqbox"></div>') +
    (c[3]===null?blank:`<div class="hole midi">${c[3]?slot(c[3]):''}</div>`) +
    (c[4][0]=='@' ? `<button class="slot d-flex align-items-center justify-content-center">${use('link',26,18)}${out?'':`<span class="ps-2 ms-2" style="border-left:2px solid #414141">${c[4].slice(1)}</span>`}</button>` : slot(c[4],1,i==8)) +
    `<div class="hole fxbox">${c[5]?c[5].split(' ').map(f=>slot(f.replace(/\*o?$/,''),/\*/.test(f),/\*o$/.test(f))).join(''):''}</div>` +
    (out?blank+blank:`<div>${[0,1].map(k=>{const s=c[6][k]; return `<div class="sendrow">${s?slot(s.slice(0,5),/\*/.test(s))+sendKnob(/p$/.test(s),/\*/.test(s),sel):'<div class="hole"></div><div class="dot"></div>'}</div>`}).join('')}<div class="hole sendtail"></div></div>` + slot('St Out'));
  h += `<div class="hole sq" style="height:37px"></div><button class="slot ${aux&&!out?'':'read'}">Read</button>`;
  h += `<div class="d-flex justify-content-center">${use(c[7],55,66)}</div>`;
  h += mst ? blank : `<div>${knob(74,c[8],c[8]?(c[8]>0?'+':'')+c[8]:'',sel,1)}</div>`;
  h += `<div class="d-flex gap-1"><div class="dbv">0,0</div>${mst?'':db(c[9])}</div>` + fader(c[10],mst);
  h += `<div>${out?'<div class="d-flex ms mb-1"><div class="w-50"></div><button class="slot">Bnc</button></div>':''}<div class="d-flex ms gap-1"><button class="slot">M</button>${out?'<div style="flex:1 1 0"></div>':`<button class="slot">${mst?'D':'S'}</button>`}</div></div>`;
  return `<div class="chan ${sel?'sel':''}">${h}<div class="nametag" style="background:${c[12]}">${c[11]}</div></div>`;
}
const lbH=[38,20,61,54,37,305,102,37,37,37,66,74,38], lbT=['Setting','Gain Reduction','EQ','MIDI FX','Input','Audio FX','Sends','Output','Group','Automation','','Pan','dB'];
const lbC={1:16,2:61,11:74};
const scale = `<div class="fadercell" style="margin-right:-12px"><svg width="194" height="290">${ticks(168,9,192)}<path d="M168 76h24" stroke="#fff" stroke-width="4"/>${[6,3,0,3,6,10,15,20,30,40,'∞'].map((n,k)=>`<text x="164" y="${majL[k]+5}">${n}</text>`).join('')}</svg></div>`;
$('rack').innerHTML = `<div class="chan rlabels">${lbT.map((t,k)=>`<div style="height:${lbH[k]}px;line-height:${lbC[k]||37}px">${t}</div>`).join('')}${scale}<div></div><div></div></div>` + ch.map(strip).join('') + '<div></div>';

/* inspector channel strip */
$('inspCh').innerHTML = `<button class="slot mute">Setting</button><div class="hole sq gainrow mt-2"></div>
 <div class="hole sq text-center dusk" style="height:65px;line-height:65px;margin-top:8px">EQ</div>
 <button class="slot d-flex align-items-center justify-content-center" style="margin-top:66px">${use('link',26,18)}</button>
 <div class="hole text-center dusk" style="height:127px;line-height:127px;margin-top:15px">Audio FX</div>
 <div class="hole sq text-center dusk" style="height:38px;line-height:36px;margin-top:189px">Group</div>
 <button class="slot read" style="margin-top:11px">Read</button>
 <div style="margin-top:17px">${knob(74,0,'',0,1)}</div>
 <div class="d-flex" style="gap:7px;margin-top:16px"><div class="dbv">0,0</div><div class="dbv pk rd">3,1</div></div>
 <div style="margin:45px 0 8px 8px">${fader([2,2])}</div>
 <div class="d-flex ms"><div class="w-50"></div><button class="slot">Bnce</button></div>
 <div class="d-flex ms" style="margin-top:5px"><button class="slot">M</button><div class="w-50"></div></div>
 <div class="text-center fw-medium" style="margin-top:32px;font-size:22px">Stereo Out</div>`;
</script>
<script src="https://cdn.jsdelivr.net/npm/bootstrap@5.3.0/dist/js/bootstrap.bundle.min.js"></script>
</body>
</html>
